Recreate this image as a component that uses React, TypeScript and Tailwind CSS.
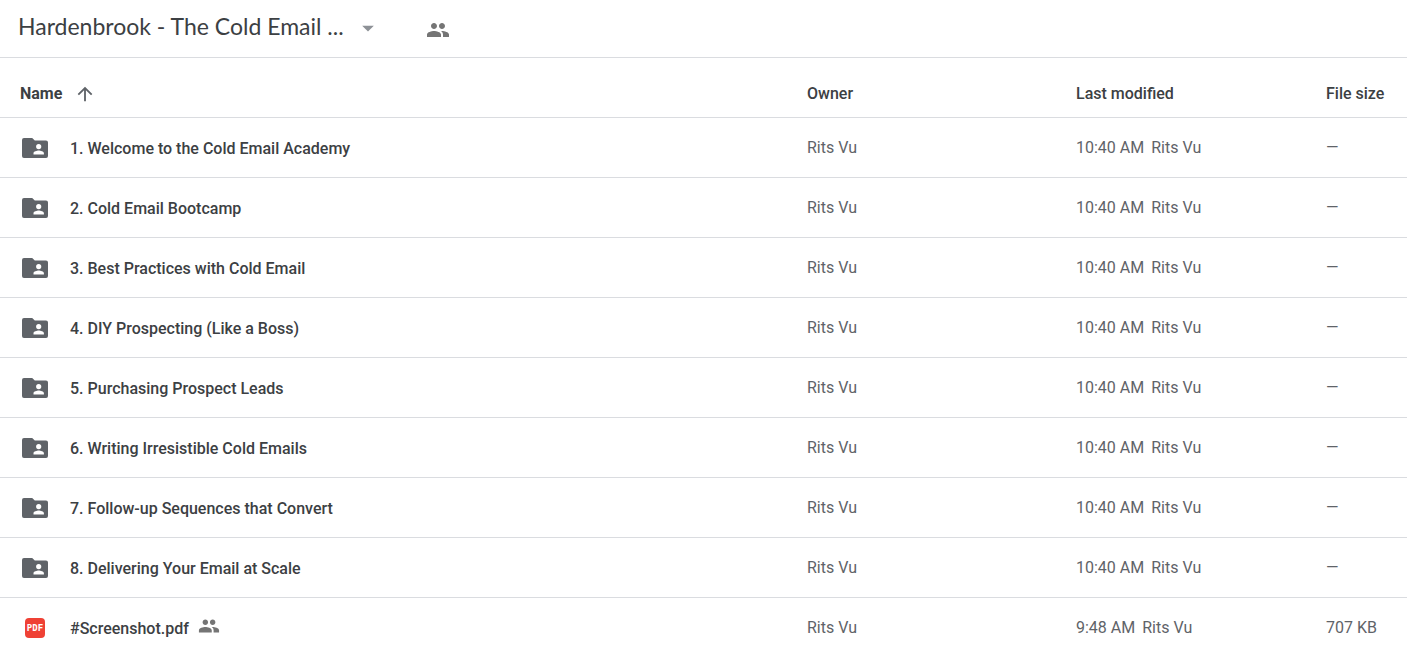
import { MdArrowUpward, MdArrowDropDown, MdPeople } from "react-icons/md";

type Item = {
  name: string;
  kind: "folder" | "pdf";
  owner: string;
  time: string;
  size: string;
};

const folderNames = [
  "1. Welcome to the Cold Email Academy",
  "2. Cold Email Bootcamp",
  "3. Best Practices with Cold Email",
  "4. DIY Prospecting (Like a Boss)",
  "5. Purchasing Prospect Leads",
  "6. Writing Irresistible Cold Emails",
  "7. Follow-up Sequences that Convert",
  "8. Delivering Your Email at Scale",
];

const items: Item[] = [
  ...folderNames.map(
    (name): Item => ({ name, kind: "folder", owner: "Rits Vu", time: "10:40 AM", size: "—" }),
  ),
  { name: "#Screenshot.pdf", kind: "pdf", owner: "Rits Vu", time: "9:48 AM", size: "707 KB" },
];

function SharedFolderIcon() {
  return (
    <svg viewBox="0 0 26 20" className="h-5 w-[26px]" aria-hidden="true">
      <path
        fill="#5f6368"
        fillRule="evenodd"
        d="M2 0h8.200l2.600 2.500H24a2 2 0 0 1 2 2V18a2 2 0 0 1-2 2H2a2 2 0 0 1-2-2V2a2 2 0 0 1 2-2zM16.700 6a2.600 2.600 0 1 0 0 5.200a2.600 2.600 0 0 0 0-5.200zM11.500 16.500h10.400v-1.200c0-1.800-3.400-2.700-5.200-2.700s-5.200.9-5.200 2.700z"
      />
    </svg>
  );
}

function PdfIcon() {
  return (
    <span className="flex h-5 w-5 items-center justify-center rounded-sm bg-[#ef4135] pt-px font-['DejaVu_Sans_Mono',monospace] text-[9px] leading-none font-bold text-white">
      PDF
    </span>
  );
}

function FileRow({ item }: { item: Item }) {
  return (
    <tr className="h-15 text-base text-[#5f6368] *:border-b *:border-[#dadce0]">
      <td className="pl-5">
        <div className="flex items-center">
          <span className="flex w-[30px] justify-center">
            {item.kind === "folder" ? <SharedFolderIcon /> : <PdfIcon />}
          </span>
          <a href="#" className="ml-5 pt-0.5 font-medium text-[#3c4043]">
            {item.name}
          </a>
          {item.kind === "pdf" && (
            <MdPeople className="mb-1 ml-[9px] size-[22px] text-[#757575]" aria-label="Shared" />
          )}
        </div>
      </td>
      <td>{item.owner}</td>
      <td>
        <span className="mr-[7px]">{item.time}</span>
        <span>{item.owner}</span>
      </td>
      <td>{item.size}</td>
    </tr>
  );
}

export default function App() {
  return (
    <main className="overflow-hidden bg-white font-['Roboto',sans-serif]">
      <header className="flex h-[58px] items-center border-b border-[#dadce0] pl-[18px]">
        <h1 className="pb-0.5 font-['Lato',sans-serif] text-[23px] font-normal text-[#3c4043]">
          <button type="button" className="flex items-center gap-2.5">
            <span className="pb-0.5">Hardenbrook - The Cold Email ...</span>
            <MdArrowDropDown className="size-7 text-[#8d9196]" aria-hidden="true" />
          </button>
        </h1>
        <button type="button" aria-label="Manage access" className="ml-11 pt-0.5">
          <MdPeople className="size-6 text-[#757575]" />
        </button>
      </header>
      <table className="w-full table-fixed border-separate border-spacing-0 text-left">
        <colgroup>
          <col />
          <col className="w-[269px]" />
          <col className="w-[250px]" />
          <col className="w-[81px]" />
        </colgroup>
        <thead>
          <tr className="h-15 text-base text-[#3c4043] *:border-b *:border-[#dadce0]">
            <th className="pt-3 pl-5 font-bold">
              <button type="button" className="flex items-center gap-3">
                Name
                <MdArrowUpward className="size-[22px] text-[#5f6368]" aria-hidden="true" />
              </button>
            </th>
            <th className="pt-3 font-medium">Owner</th>
            <th className="pt-3 font-medium">Last modified</th>
            <th className="pt-3 font-medium">File size</th>
          </tr>
        </thead>
        <tbody>
          {items.map((item) => (
            <FileRow key={item.name} item={item} />
          ))}
        </tbody>
      </table>
    </main>
  );
}
